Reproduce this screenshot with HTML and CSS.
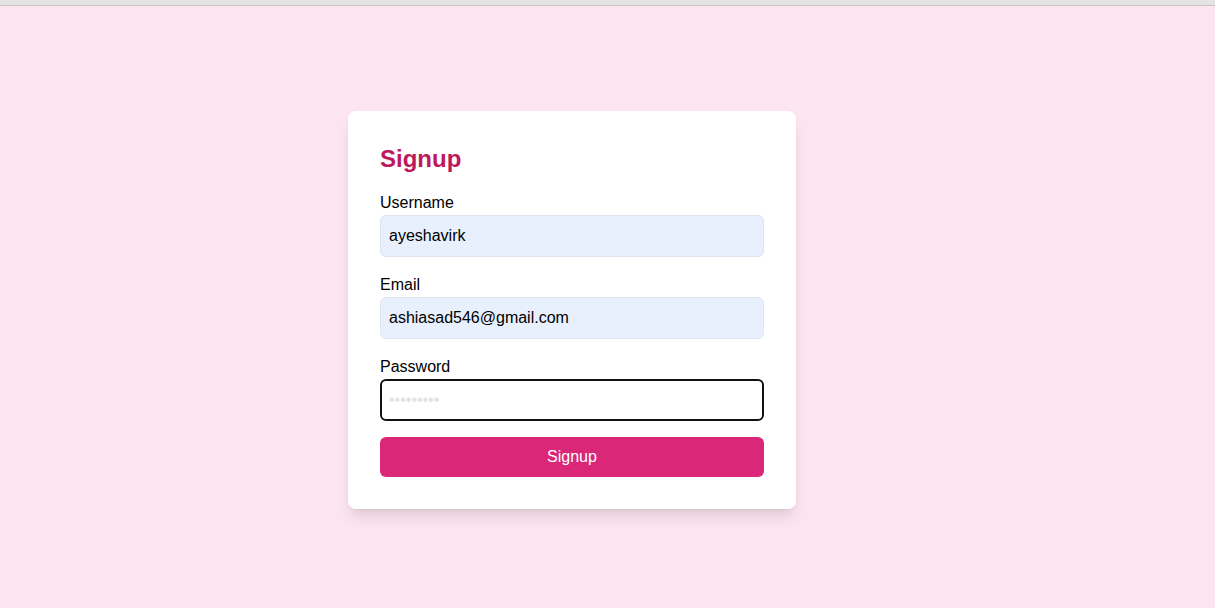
FILE: index.html
```html
<!DOCTYPE html>
<html lang="en">
<head>
<meta charset="utf-8">
<title>Signup</title>
<link rel="stylesheet" href="styles.css">
</head>
<body>
<div class="topbar"></div>
<main class="page">
  <form class="card">
    <h2 class="title">Signup</h2>
    <div class="field">
      <label class="label" for="u">Username</label>
      <input class="input filled" id="u" type="text" value="ayeshavirk">
    </div>
    <div class="field">
      <label class="label" for="e">Email</label>
      <input class="input filled" id="e" type="email" value="ashiasad546@gmail.com">
    </div>
    <div class="field">
      <label class="label" for="p">Password</label>
      <input class="input active" id="p" type="password" placeholder="•••••••••">
    </div>
    <button class="btn" type="button">Signup</button>
  </form>
</main>
</body>
</html>
```
FILE: styles.css
```css
* { box-sizing: border-box; }
html, body { margin: 0; padding: 0; }
body {
  font-family: "Liberation Sans", Arial, sans-serif;
  background: #fce4f0;
  color: #000;
  height: 608px;
  overflow: hidden;
}
.topbar {
  height: 6px;
  background: #e3e3e3;
  border-bottom: 1px solid #c6c6c6;
}
.page {
  height: 602px;
  display: flex;
  align-items: center;
  padding-left: 348px;
  padding-top: 6px;
}
.card {
  width: 448px;
  background: #fff;
  border-radius: 8px;
  padding: 32px;
  box-shadow: 0 10px 15px -3px rgba(0,0,0,0.1), 0 4px 6px -4px rgba(0,0,0,0.1);
}
.title {
  margin: 0 0 16px;
  font-size: 24px;
  line-height: 32px;
  font-weight: 700;
  color: #be185d;
}
.field { margin-bottom: 16px; }
.label {
  display: block;
  font-size: 16px;
  line-height: 24px;
}
.input {
  display: block;
  width: 100%;
  height: 42px;
  padding: 8px;
  font-family: inherit;
  font-size: 16px;
  line-height: 24px;
  color: #000;
  border: 1px solid #dfe5ee;
  border-radius: 6px;
  background: #fff;
  outline: none;
}
.input.filled { background: #e8f0fe; }
.input.active {
  border: 2px solid #111;
  padding: 7px 7px;
}
.input::placeholder { color: #e3e3e3; }
.btn {
  display: block;
  width: 100%;
  height: 40px;
  border: 0;
  border-radius: 6px;
  background: #db2777;
  color: #fff;
  font-family: inherit;
  font-size: 16px;
}
```
